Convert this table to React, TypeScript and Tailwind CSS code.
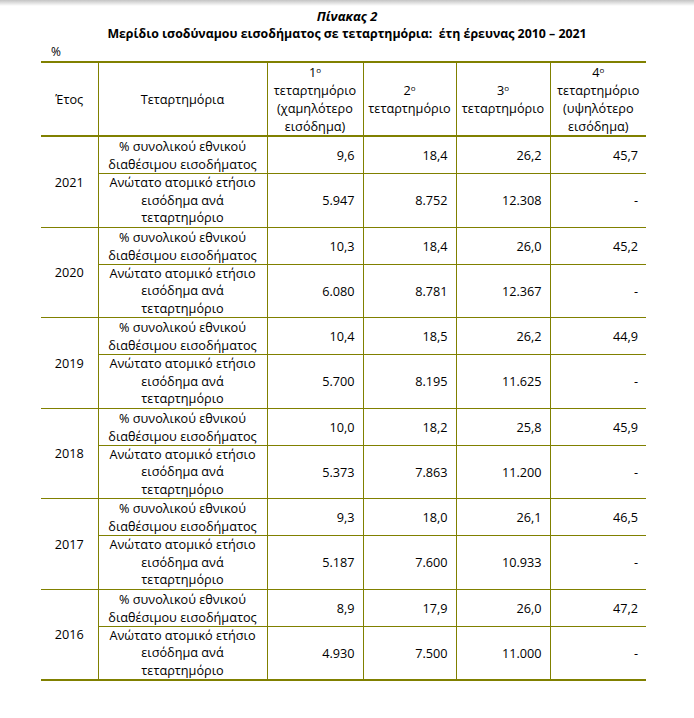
const rows = [
  { year: '2021', share: ['9,6', '18,4', '26,2', '45,7'], max: ['5.947', '8.752', '12.308', '-'] },
  { year: '2020', share: ['10,3', '18,4', '26,0', '45,2'], max: ['6.080', '8.781', '12.367', '-'] },
  { year: '2019', share: ['10,4', '18,5', '26,2', '44,9'], max: ['5.700', '8.195', '11.625', '-'] },
  { year: '2018', share: ['10,0', '18,2', '25,8', '45,9'], max: ['5.373', '7.863', '11.200', '-'] },
  { year: '2017', share: ['9,3', '18,0', '26,1', '46,5'], max: ['5.187', '7.600', '10.933', '-'] },
  { year: '2016', share: ['8,9', '17,9', '26,0', '47,2'], max: ['4.930', '7.500', '11.000', '-'] },
];

const line = 'border-[#808000]';

export default function App() {
  return (
    <div className="min-h-[718px] w-[694px] bg-white text-[12.7px] leading-[18px] text-black" style={{ fontFamily: '"Open Sans", "Noto Sans", sans-serif' }}>
      <div className="h-[6px] bg-gradient-to-b from-[#c4c4c4] to-white" />
      <div className="pt-[1px] text-center">
        <div className="text-[13px] font-bold italic leading-[18px]">Πίνακας 2</div>
        <div className="text-[12.35px] font-bold leading-[18px]">
          Μερίδιο ισοδύναμου εισοδήματος σε τεταρτημόρια:&nbsp; έτη έρευνας 2010 – 2021
        </div>
      </div>
      <div className="pl-[51px] text-[12px] leading-[18px]">%</div>
      <table className={`ml-[41px] w-[605px] table-fixed border-collapse border-t-2 border-b-2 ${line}`}>
        <colgroup>
          <col className="w-[57px]" />
          <col className="w-[169px]" />
          <col className="w-[96px]" />
          <col className="w-[93px]" />
          <col className="w-[94px]" />
          <col className="w-[96px]" />
        </colgroup>
        <thead>
          <tr className={`h-[72px] border-b-2 ${line}`}>
            <th className={`border-r ${line} font-normal`}>Έτος</th>
            <th className={`border-r ${line} font-normal`}>Τεταρτημόρια</th>
            <th className={`border-r ${line} font-normal`}>
              1<sup className="text-[8px]">ο</sup>
              <br />
              τεταρτημόριο (χαμηλότερο εισόδημα)
            </th>
            <th className={`border-r ${line} font-normal`}>
              2<sup className="text-[8px]">ο</sup>
              <br />
              τεταρτημόριο
            </th>
            <th className={`border-r ${line} font-normal`}>
              3<sup className="text-[8px]">ο</sup>
              <br />
              τεταρτημόριο
            </th>
            <th className="font-normal">
              4<sup className="text-[8px]">ο</sup>
              <br />
              τεταρτημόριο (υψηλότερο εισόδημα)
            </th>
          </tr>
        </thead>
        <tbody>
          {rows.map((r, i) => (
            <YearRows key={r.year} row={r} last={i === rows.length - 1} />
          ))}
        </tbody>
      </table>
    </div>
  );
}

function YearRows({ row, last }: { row: (typeof rows)[number]; last: boolean }) {
  return (
    <>
      <tr className={`h-[36px] border-b ${line}`}>
        <td rowSpan={2} className={`border-r ${line} text-center ${last ? '' : 'border-b'}`}>
          {row.year}
        </td>
        <td className={`border-r ${line} text-center`}>
          % συνολικού εθνικού
          <br />
          διαθέσιμου εισοδήματος
        </td>
        {row.share.map((v, j) => (
          <td key={j} className={`${j < 3 ? `border-r ${line}` : ''} pr-[8px] text-right`}>
            {v}
          </td>
        ))}
      </tr>
      <tr className={`h-[53px] ${last ? '' : `border-b ${line}`}`}>
        <td className={`border-r ${line} text-center leading-[17.5px]`}>
          Ανώτατο ατομικό ετήσιο
          <br />
          εισόδημα ανά
          <br />
          τεταρτημόριο
        </td>
        {row.max.map((v, j) => (
          <td key={j} className={`${j < 3 ? `border-r ${line}` : ''} pr-[8px] text-right`}>
            {v}
          </td>
        ))}
      </tr>
    </>
  );
}
